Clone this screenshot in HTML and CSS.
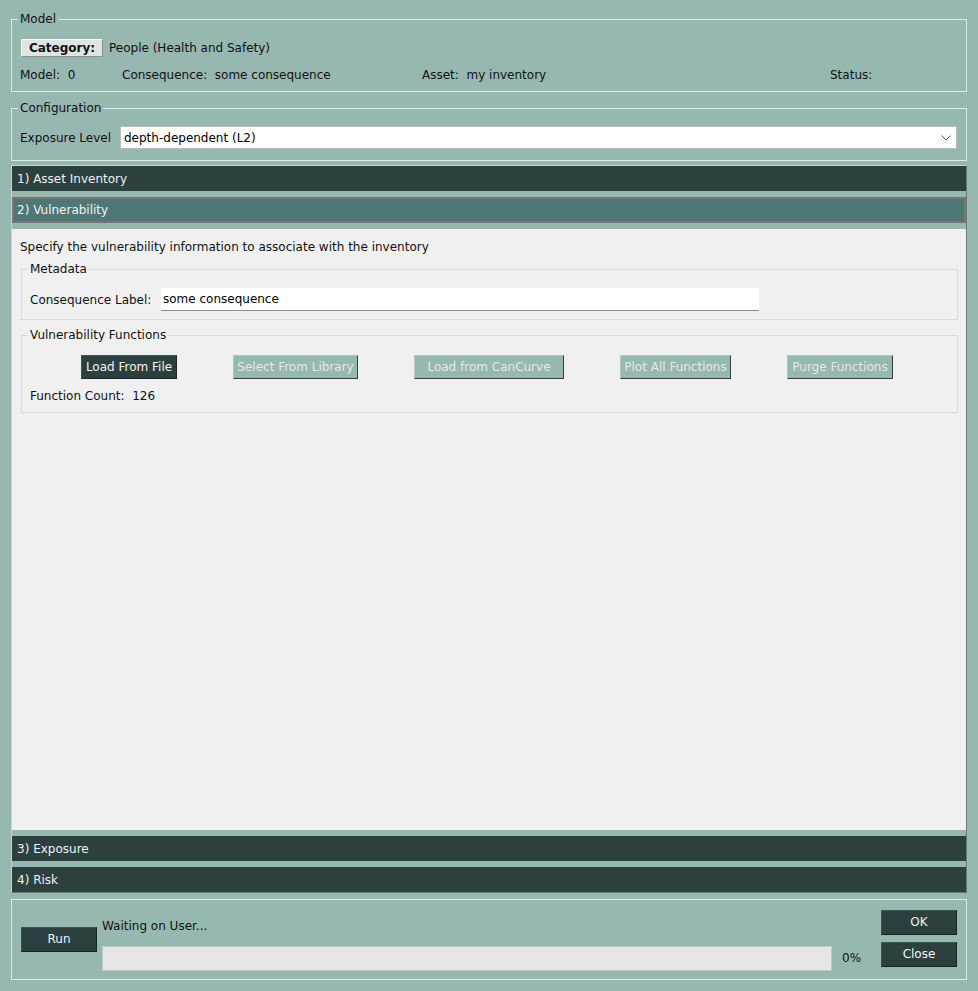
FILE: index.html
```html
<!DOCTYPE html>
<html>
<head>
<meta charset="utf-8">
<link rel="stylesheet" href="styles.css">
</head>
<body>
<div class="app">
  <fieldset class="group model">
    <legend>Model</legend>
    <div class="cat-row"><span class="cat-btn">Category:</span><span class="cat-val">People (Health and Safety)</span></div>
    <div class="info-row">
      <span>Model:&nbsp; 0</span>
      <span>Consequence:&nbsp; some consequence</span>
      <span>Asset:&nbsp; my inventory</span>
      <span>Status:</span>
    </div>
  </fieldset>

  <fieldset class="group config">
    <legend>Configuration</legend>
    <div class="config-row">
      <span class="config-label">Exposure Level</span>
      <div class="combo">
        <span>depth-dependent (L2)</span>
        <svg class="chev" width="10" height="6" viewBox="0 0 10 6"><polyline points="0.5,0.5 5,5 9.5,0.5" fill="none" stroke="#555" stroke-width="1"/></svg>
      </div>
    </div>
  </fieldset>

  <div class="toolbox">
    <div class="tb-head">1) Asset Inventory</div>
    <div class="tb-head active">2) Vulnerability</div>
    <div class="tb-content">
      <div class="intro">Specify the vulnerability information to associate with the inventory</div>
      <fieldset class="group inner meta">
        <legend>Metadata</legend>
        <div class="meta-row">
          <span class="meta-label">Consequence Label:</span>
          <div class="line-input">some consequence</div>
        </div>
      </fieldset>
      <fieldset class="group inner funcs">
        <legend>Vulnerability Functions</legend>
        <div class="btn-row">
          <span class="btn dark w1">Load From File</span>
          <span class="btn disabled w2">Select From Library</span>
          <span class="btn disabled w3">Load from CanCurve</span>
          <span class="btn disabled w4">Plot All Functions</span>
          <span class="btn disabled w5">Purge Functions</span>
        </div>
        <div class="count">Function Count:&nbsp; 126</div>
      </fieldset>
    </div>
    <div class="tb-head">3) Exposure</div>
    <div class="tb-head">4) Risk</div>
  </div>

  <div class="run-box">
    <span class="btn dark run">Run</span>
    <div class="progress-col">
      <div class="status">Waiting on User...</div>
      <div class="progress-row">
        <div class="bar"></div>
        <span class="pct">0%</span>
      </div>
    </div>
    <div class="side-btns">
      <span class="btn dark side">OK</span>
      <span class="btn dark side">Close</span>
    </div>
  </div>
</div>
</body>
</html>
```

FILE: styles.css
```css
html, body {
  margin: 0;
  padding: 0;
  background: #97b7b1;
}
body {
  font-family: "DejaVu Sans", sans-serif;
  font-size: 12px;
  line-height: 16px;
  color: #111;
}
.app {
  padding: 11px 11px 0 11px;
  width: 956px;
}
.group {
  margin: 0;
  border: 1px solid #dfe8e6;
  padding: 0 8px 0 8px;
  min-width: 0;
}
.group legend {
  padding: 0 2px;
  margin-left: -2px;
  line-height: 16px;
}
.model {
  padding-top: 12px;
  padding-bottom: 8px;
}
.cat-row {
  display: flex;
  align-items: center;
  height: 18px;
  margin-left: 1px;
}
.cat-btn {
  display: inline-block;
  box-sizing: border-box;
  width: 82px;
  height: 18px;
  line-height: 16px;
  text-align: center;
  font-weight: bold;
  background: #dfe5e3;
  border-top: 1px solid #f4f6f5;
  border-left: 1px solid #f4f6f5;
  border-right: 1px solid #8b8f8e;
  border-bottom: 1px solid #8b8f8e;
}
.cat-val {
  margin-left: 6px;
}
.info-row {
  display: grid;
  grid-template-columns: 102px 300px 408px auto;
  margin-top: 10px;
  white-space: pre;
}
.config {
  margin-top: 8px;
  padding-top: 10px;
  padding-bottom: 11px;
}
.config-row {
  display: flex;
  align-items: center;
}
.config-label {
  width: 100px;
}
.combo {
  flex: 1;
  box-sizing: border-box;
  height: 23px;
  background: #fff;
  border: 1px solid #bcbcbc;
  display: flex;
  align-items: center;
  justify-content: space-between;
  padding: 0 5px 0 3px;
  margin-right: 1px;
  color: #000;
}
.chev {
  display: block;
}
.toolbox {
  margin-top: 4px;
  border-top: 1px solid #c6d6d3;
  border-left: 1px solid #c6d6d3;
  border-right: 1px solid #6b7a78;
  border-bottom: 1px solid #6b7a78;
  display: flex;
  flex-direction: column;
  gap: 6px;
}
.tb-head {
  height: 25px;
  line-height: 26px;
  background: #2c4040;
  color: #f2f2f2;
  padding-left: 5px;
}
.tb-head.active {
  box-sizing: border-box;
  height: 26px;
  line-height: 23px;
  background: #4e7775;
  border: 2px solid #767676;
  padding-left: 3px;
}
.tb-content {
  height: 601px;
  background: #f0f0f0;
  padding: 10px 8px 0 9px;
  box-sizing: border-box;
}
.intro {
  margin-left: -1px;
}
.group.inner {
  border-color: #dadada;
  margin-top: 6px;
}
.meta {
  padding-top: 11px;
  padding-bottom: 8px;
}
.meta-row {
  display: flex;
  align-items: center;
}
.meta-label {
  width: 131px;
}
.line-input {
  box-sizing: border-box;
  width: 598px;
  height: 23px;
  line-height: 22px;
  background: #fff;
  border-bottom: 1px solid #8a8a8a;
  padding-left: 2px;
  color: #000;
}
.group.inner.funcs {
  margin-top: 7px;
  padding-top: 12px;
  padding-bottom: 8px;
}
.btn-row {
  display: flex;
  gap: 56px;
  margin: 0 -8px;
  padding-left: 59px;
}
.btn {
  display: inline-block;
  box-sizing: border-box;
  height: 24px;
  line-height: 22px;
  text-align: center;
  white-space: nowrap;
}
.btn.dark {
  background: #2c4040;
  color: #f4f4f4;
  border-top: 1px solid #3e5554;
  border-left: 1px solid #3e5554;
  border-right: 1px solid #182525;
  border-bottom: 1px solid #182525;
}
.btn.disabled {
  background: #97b7b1;
  color: #e2eae8;
  border-top: 1px solid #b0c8c4;
  border-left: 1px solid #b0c8c4;
  border-right: 1px solid #33403f;
  border-bottom: 1px solid #33403f;
}
.w1 { width: 96px; }
.w2 { width: 125px; }
.w3 { width: 150px; }
.w4 { width: 111px; }
.w5 { width: 106px; }
.count {
  margin-top: 9px;
}
.run-box {
  margin-top: 6px;
  height: 81px;
  box-sizing: border-box;
  border: 1px solid #dfe8e6;
  display: flex;
  align-items: center;
  padding: 0 9px 0 9px;
}
.btn.run {
  width: 76px;
  height: 25px;
  line-height: 23px;
}
.progress-col {
  flex: 1;
  margin-left: 5px;
  padding-top: 9px;
}
.status {
  line-height: 16px;
}
.progress-row {
  display: flex;
  align-items: center;
  margin-top: 12px;
}
.bar {
  box-sizing: border-box;
  width: 730px;
  height: 25px;
  background: #e6e6e6;
  border: 1px solid #c6c6c6;
}
.pct {
  margin-left: 10px;
}
.side-btns {
  display: flex;
  flex-direction: column;
  gap: 7px;
  margin-left: auto;
  padding-bottom: 2px;
}
.btn.side {
  width: 76px;
  height: 25px;
  line-height: 23px;
}
```
